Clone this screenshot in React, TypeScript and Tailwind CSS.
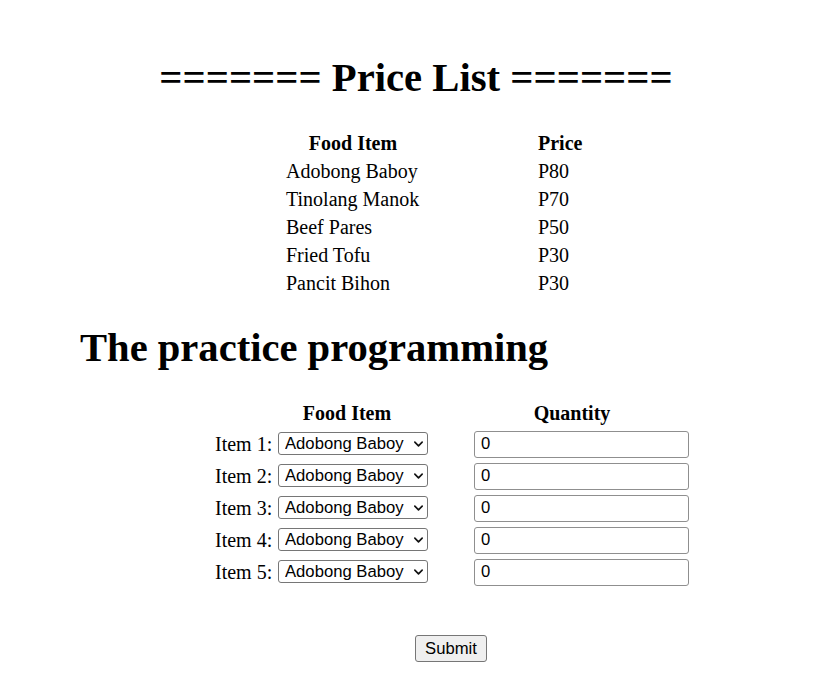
import { useState } from "react";

const prices = [
  ["Adobong Baboy", "P80"],
  ["Tinolang Manok", "P70"],
  ["Beef Pares", "P50"],
  ["Fried Tofu", "P30"],
  ["Pancit Bihon", "P30"],
];

function Chevron() {
  return (
    <svg
      viewBox="0 0 12 12"
      className="pointer-events-none absolute right-[4px] top-1/2 h-[11px] w-[11px] -translate-y-1/2"
      fill="none"
      stroke="#111"
      strokeWidth="1.8"
      strokeLinecap="round"
      strokeLinejoin="round"
    >
      <polyline points="2 4 6 8 10 4" />
    </svg>
  );
}

function OrderRow({ n }: { n: number }) {
  const [qty, setQty] = useState("0");
  return (
    <div className="flex h-[32px] items-center pl-[215px]">
      <div className="flex w-[259px] items-center">
        <span className="w-[63px] text-[20px] leading-[28px]">Item {n}:</span>
        <div className="relative">
          <select className="h-[23px] w-[150px] appearance-none rounded-[3px] border border-[#767676] bg-white pl-[6px] pr-[18px] font-['Liberation_Sans',Arial,sans-serif] text-[16.67px] leading-[21px] text-black">
            {prices.map(([name]) => (
              <option key={name}>{name}</option>
            ))}
          </select>
          <Chevron />
        </div>
      </div>
      <input
        value={qty}
        onChange={(e) => setQty(e.target.value)}
        className="h-[27px] w-[215px] rounded-[3px] border border-[#8f8f8f] bg-white px-[6px] font-['Liberation_Sans',Arial,sans-serif] text-[16.67px] text-black outline-none"
      />
    </div>
  );
}

export default function App() {
  return (
    <div className="min-h-screen bg-white pt-[58px] font-['Liberation_Serif','Times_New_Roman',serif] text-black">
      {/* Price list */}
      <h1 className="h-[40px] pl-[18px] text-center text-[40.7px] font-bold leading-[40px]">
        ======= Price List =======
      </h1>

      <div className="mt-[31px] pl-[286px]">
        <div className="flex h-[28px] items-center text-[20px] font-bold leading-[28px]">
          <span className="w-[134px] text-center">Food Item</span>
          <span className="ml-[118px]">Price</span>
        </div>
        {prices.map(([name, price]) => (
          <div key={name} className="flex h-[28px] items-center text-[20px] leading-[28px]">
            <span className="w-[134px] whitespace-nowrap">{name}</span>
            <span className="ml-[118px]">{price}</span>
          </div>
        ))}
      </div>

      <h2 className="mt-[31px] h-[40px] pl-[80px] text-[40.6px] font-bold leading-[40px]">
        The practice programming
      </h2>

      {/* Order form */}
      <div className="mt-[31px] flex h-[28px] items-center text-[20px] font-bold leading-[28px]">
        <span className="ml-[215px] w-[264px] text-center">Food Item</span>
        <span className="w-[186px] text-center">Quantity</span>
      </div>
      <div className="mt-[1px]">
        {[1, 2, 3, 4, 5].map((n) => (
          <OrderRow key={n} n={n} />
        ))}
      </div>

      <div className="mt-[47px] pl-[415px]">
        <button className="h-[27px] w-[72px] rounded-[3px] border border-[#767676] bg-[#efefef] font-['Liberation_Sans',Arial,sans-serif] text-[16.67px] text-black">
          Submit
        </button>
      </div>
    </div>
  );
}
